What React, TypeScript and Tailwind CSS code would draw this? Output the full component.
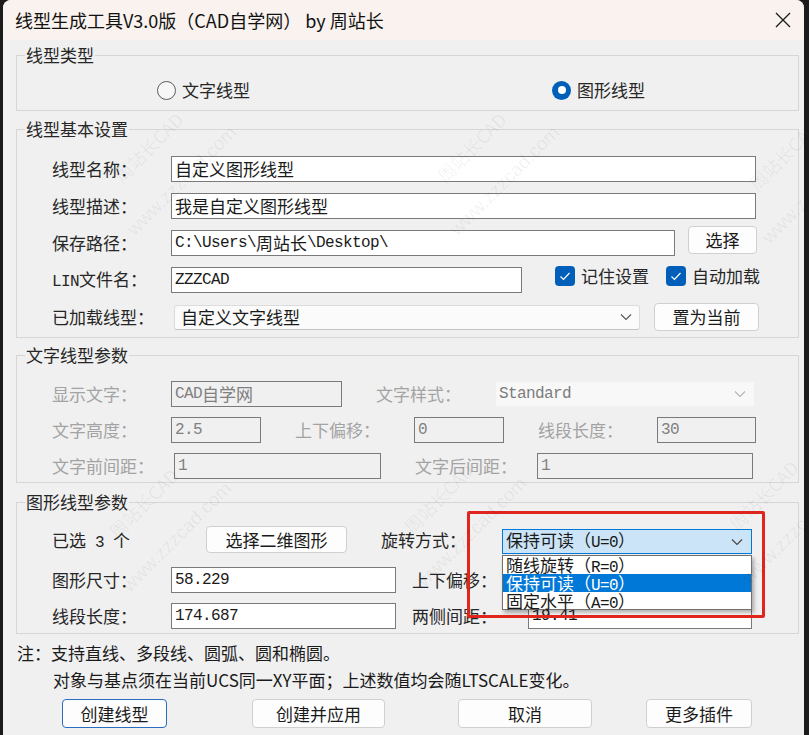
import React from "react";

const mono = "font-['Liberation_Mono',monospace] text-[16px] tracking-[-0.6px] whitespace-pre";

// Renders CJK runs in the base font and ASCII runs in a narrower mono face,
// so that half-width characters take half the width of a CJK cell.
function Txt({ s }: { s: string }) {
  const parts = s.split(/([\x20-\x7e]+)/).filter(Boolean);
  return (
    <>
      {parts.map((p, i) =>
        /^[\x20-\x7e]+$/.test(p) ? (
          <span key={i} className={mono}>
            {p}
          </span>
        ) : (
          <span key={i}>{p}</span>
        )
      )}
    </>
  );
}

function Label({ s, cls, off }: { s: string; cls: string; off?: boolean }) {
  return (
    <span
      className={`shrink-0 whitespace-nowrap text-[17px] leading-[24px] ${cls} ${
        off ? "text-[#a3a3a3]" : "text-[#262626]"
      }`}
    >
      <Txt s={s} />
    </span>
  );
}

function Field({ s, cls, off }: { s: string; cls: string; off?: boolean }) {
  return (
    <div
      className={`h-[26px] shrink-0 border flex items-center pl-[3px] whitespace-nowrap overflow-hidden text-[17px] leading-[24px] ${cls} ${
        off
          ? "bg-[#f0f0f0] border-[#7a7a7a] text-[#808080]"
          : "bg-white border-[#7a7a7a] text-[#1a1a1a]"
      }`}
    >
      <Txt s={s} />
    </div>
  );
}

function Btn({ s, cls }: { s: string; cls: string }) {
  return (
    <div
      className={`shrink-0 flex items-center justify-center bg-[#fdfdfd] border rounded-[4px] text-[17px] leading-[24px] text-[#1a1a1a] ${cls}`}
    >
      {s}
    </div>
  );
}

function Chevron({ color }: { color: string }) {
  return (
    <svg width="12" height="8" viewBox="0 0 12 8" className="shrink-0">
      <path d="M1 1.5 L6 6.5 L11 1.5" fill="none" stroke={color} strokeWidth="1.1" />
    </svg>
  );
}

function Check({ s }: { s: string }) {
  return (
    <div className="flex items-center shrink-0">
      <div className="w-[20px] h-[20px] rounded-[4px] bg-[#005fb8] flex items-center justify-center">
        <svg width="20" height="20" viewBox="0 0 20 20">
          <path d="M5.5 10.5 L8.5 13.5 L14.5 7" fill="none" stroke="#fff" strokeWidth="1.2" />
        </svg>
      </div>
      <span className="ml-[6px] text-[17px] leading-[24px] text-[#262626]">{s}</span>
    </div>
  );
}

function Group({
  legend,
  cls,
  children,
}: {
  legend: string;
  cls: string;
  children?: React.ReactNode;
}) {
  return (
    <div className={`relative ml-[13px] mr-[5px] border border-[#d6d6d6] shrink-0 ${cls}`}>
      <span className="absolute left-[8px] -top-[13px] px-[1px] bg-[#f0f0f0] text-[17px] leading-[24px] text-[#262626]">
        {legend}
      </span>
      {children}
    </div>
  );
}

function Mark({ cls }: { cls: string }) {
  return (
    <div
      className={`absolute -translate-x-1/2 -translate-y-1/2 -rotate-45 flex flex-col items-center gap-[24px] text-[18px] leading-[24px] text-black/[0.06] whitespace-nowrap pointer-events-none z-30 ${cls}`}
    >
      <span>周站长CAD</span>
      <span className="font-['Liberation_Sans',sans-serif] text-[19px]">www.zzzcad.com</span>
    </div>
  );
}

export default function App() {
  return (
    <div className="relative w-[809px] h-[735px] bg-[#1b1b1b] overflow-hidden font-['Noto_Sans_CJK_SC',sans-serif]">
      <div className="ml-[3px] w-[801px] h-[735px] bg-[#f0f0f0] rounded-t-[8px] overflow-hidden flex flex-col">
        {/* title bar */}
        <div className="h-[40px] shrink-0 bg-[#f9f2ee] flex items-center justify-between pl-[12px] pr-[13px]">
          <span className="text-[18px] leading-[26px] text-[#111]">
            线型生成工具V3.0版（CAD自学网） by 周站长
          </span>
          <svg width="16" height="16" viewBox="0 0 16 16">
            <path d="M1 1 L15 15 M15 1 L1 15" stroke="#1a1a1a" strokeWidth="1.3" />
          </svg>
        </div>

        {/* 线型类型 */}
        <Group legend="线型类型" cls="mt-[15px] h-[56px]">
          <div className="flex items-center h-[22px] mt-[23px] pl-[140px]">
            <div className="flex items-center w-[395px] shrink-0">
              <div className="w-[19px] h-[19px] rounded-full border border-[#5a5a5a] bg-[#f7f7f7]" />
              <span className="ml-[6px] text-[17px] leading-[24px] text-[#262626]">文字线型</span>
            </div>
            <div className="flex items-center">
              <div className="w-[19px] h-[19px] rounded-full bg-[#005fb8] flex items-center justify-center">
                <div className="w-[8px] h-[8px] rounded-full bg-white" />
              </div>
              <span className="ml-[6px] text-[17px] leading-[24px] text-[#262626]">图形线型</span>
            </div>
          </div>
        </Group>

        {/* 线型基本设置 */}
        <Group legend="线型基本设置" cls="mt-[18px] h-[209px]">
          <div className="flex flex-col gap-[11px] pt-[26px] pl-[35px]">
            <div className="flex items-center h-[26px]">
              <Label s="线型名称：" cls="w-[119px]" />
              <Field s="自定义图形线型" cls="w-[585px]" />
            </div>
            <div className="flex items-center h-[26px]">
              <Label s="线型描述：" cls="w-[119px]" />
              <Field s="我是自定义图形线型" cls="w-[585px]" />
            </div>
            <div className="flex items-center h-[26px]">
              <Label s="保存路径：" cls="w-[119px]" />
              <Field s="C:\Users\周站长\Desktop\" cls="w-[504px]" />
              <Btn s="选择" cls="ml-[13px] w-[69px] h-[28px] self-start -mt-[4px] border-[#d0d0d0]" />
            </div>
            <div className="flex items-center h-[26px]">
              <Label s="LIN文件名：" cls="w-[119px]" />
              <Field s="ZZZCAD" cls="w-[351px]" />
              <div className="ml-[33px] self-start -mt-[3px]">
                <Check s="记住设置" />
              </div>
              <div className="ml-[17px] self-start -mt-[3px]">
                <Check s="自动加载" />
              </div>
            </div>
            <div className="flex items-center h-[26px]">
              <Label s="已加载线型：" cls="w-[122px]" />
              <div className="w-[466px] h-[25px] shrink-0 flex items-center justify-between pl-[6px] pr-[7px] bg-[#fbfbfb] border border-[#dcdcdc] border-b-[#c4c4c4] rounded-[3px] text-[17px] leading-[24px] text-[#1a1a1a]">
                <span>自定义文字线型</span>
                <Chevron color="#555" />
              </div>
              <Btn s="置为当前" cls="ml-[14px] w-[105px] h-[28px] border-[#d0d0d0]" />
            </div>
          </div>
        </Group>

        {/* 文字线型参数 (disabled) */}
        <Group legend="文字线型参数" cls="mt-[17px] h-[128px]">
          <div className="flex flex-col gap-[10px] pt-[25px] pl-[35px]">
            <div className="flex items-center h-[26px]">
              <Label off s="显示文字：" cls="w-[119px]" />
              <Field off s="CAD自学网" cls="w-[171px]" />
              <Label off s="文字样式：" cls="ml-[34px] w-[120px]" />
              <div className="w-[258px] h-[24px] shrink-0 flex items-center justify-between pl-[3px] pr-[8px] bg-[#f8f8f8] text-[17px] leading-[24px] text-[#7c7c7c]">
                <Txt s="Standard" />
                <Chevron color="#b4b4b4" />
              </div>
            </div>
            <div className="flex items-center h-[26px]">
              <Label off s="文字高度：" cls="w-[119px]" />
              <Field off s="2.5" cls="w-[90px]" />
              <Label off s="上下偏移：" cls="ml-[34px] w-[119px]" />
              <Field off s="0" cls="w-[90px]" />
              <Label off s="线段长度：" cls="ml-[34px] w-[119px]" />
              <Field off s="30" cls="w-[99px]" />
            </div>
            <div className="flex items-center h-[26px]">
              <Label off s="文字前间距：" cls="w-[122px]" />
              <Field off s="1" cls="w-[207px]" />
              <Label off s="文字后间距：" cls="ml-[34px] w-[122px]" />
              <Field off s="1" cls="w-[216px]" />
            </div>
          </div>
        </Group>

        {/* 图形线型参数 */}
        <Group legend="图形线型参数" cls="mt-[19px] h-[132px]">
          <div className="flex flex-col pt-[23px] pl-[35px]">
            <div className="flex items-start h-[28px]">
              <Label s="已选 3 个" cls="w-[154px] mt-[2px]" />
              <Btn s="选择二维图形" cls="w-[141px] h-[27px] border-[#d0d0d0]" />
              <Label s="旋转方式：" cls="ml-[34px] w-[121px] mt-[2px]" />
              <div className="relative w-[250px] h-[25px] shrink-0 mt-[3px]">
                <div className="w-full h-full flex items-center justify-between pl-[3px] pr-[8px] bg-[#cce4f7] border border-[#0078d7] text-[17px] leading-[24px] text-[#1a1a1a]">
                  <span>
                    <Txt s="保持可读（U=0）" />
                  </span>
                  <Chevron color="#444" />
                </div>
                {/* open dropdown list */}
                <div className="absolute left-0 top-[26px] w-[250px] h-[55px] z-10 bg-white border border-[#6f6f6f] shadow-[2px_3px_4px_rgba(0,0,0,0.3)] flex flex-col text-[17px]">
                  <div className="h-[18px] leading-[18px] pl-[3px] text-[#1a1a1a] whitespace-nowrap">
                    <Txt s="随线旋转（R=0）" />
                  </div>
                  <div className="h-[18px] leading-[18px] pl-[3px] bg-[#0078d7] text-white whitespace-nowrap">
                    <Txt s="保持可读（U=0）" />
                  </div>
                  <div className="h-[18px] leading-[18px] pl-[3px] text-[#1a1a1a] whitespace-nowrap">
                    <Txt s="固定水平（A=0）" />
                  </div>
                </div>
              </div>
            </div>
            <div className="flex items-center h-[26px] mt-[13px]">
              <Label s="图形尺寸：" cls="w-[119px]" />
              <Field s="58.229" cls="w-[225px]" />
              <Label s="上下偏移：" cls="ml-[16px] w-[116px]" />
              <Field s="" cls="w-[224px]" />
            </div>
            <div className="flex items-center h-[26px] mt-[10px]">
              <Label s="线段长度：" cls="w-[119px]" />
              <Field s="174.687" cls="w-[225px]" />
              <Label s="两侧间距：" cls="ml-[16px] w-[116px]" />
              <Field s="19.41" cls="w-[224px]" />
            </div>
          </div>
        </Group>

        {/* notes */}
        <div className="mt-[7px] pl-[14px] text-[17px] leading-[24px] text-[#1a1a1a] whitespace-nowrap">
          注：支持直线、多段线、圆弧、圆和椭圆。
        </div>
        <div className="mt-[3px] pl-[50px] text-[17px] leading-[24px] text-[#1a1a1a] whitespace-nowrap">
          对象与基点须在当前UCS同一XY平面；上述数值均会随LTSCALE变化。
        </div>

        {/* buttons */}
        <div className="flex items-center mt-[7px] pl-[59px]">
          <Btn s="创建线型" cls="w-[105px] h-[29px] border-[#2a6cbf]" />
          <Btn s="创建并应用" cls="ml-[85px] w-[133px] h-[29px] border-[#d0d0d0]" />
          <Btn s="取消" cls="ml-[73px] w-[134px] h-[29px] border-[#d0d0d0]" />
          <Btn s="更多插件" cls="ml-[54px] w-[106px] h-[29px] border-[#d0d0d0]" />
        </div>
      </div>

      {/* red annotation frame around the rotation dropdown */}
      <div className="absolute left-[467px] top-[511px] w-[298px] h-[107px] border-[3px] border-[#e0251d] rounded-[2px] z-20 pointer-events-none" />

      {/* tiled watermark */}
      <Mark cls="left-[165px] top-[164px]" />
      <Mark cls="left-[488px] top-[164px]" />
      <Mark cls="left-[800px] top-[172px]" />
      <Mark cls="left-[160px] top-[520px]" />
      <Mark cls="left-[455px] top-[515px]" />
      <Mark cls="left-[780px] top-[512px]" />
    </div>
  );
}
